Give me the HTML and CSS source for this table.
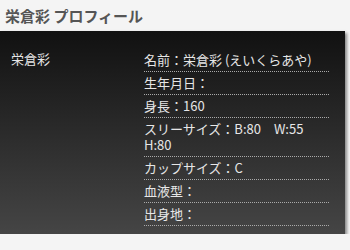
FILE: index.html
```html
<!DOCTYPE html>
<html lang="ja">
<head>
  <meta charset="UTF-8">
  <title>栄倉彩 プロフィール</title>
  <link rel="stylesheet" href="styles.css">
</head>
<body>
  <h2 class="title">栄倉彩 プロフィール</h2>

  <div class="profile">
    <div class="profile-name">栄倉彩</div>

    <!-- Profile details -->
    <ul class="profile-list">
      <li>名前：栄倉彩 (えいくらあや)</li>
      <li>生年月日：</li>
      <li>身長：160</li>
      <li>スリーサイズ：B:80　W:55　H:80</li>
      <li>カップサイズ：C</li>
      <li>血液型：</li>
      <li>出身地：</li>
    </ul>
  </div>
</body>
</html>
```

FILE: styles.css
```css
body {
  margin: 0;
  background-color: #f4f4f4;
  font-family: "Noto Sans CJK JP", "Noto Sans", sans-serif;
}

.title {
  margin: 0;
  padding: 7px 5px 6px;
  font-size: 15px;
  line-height: 18px;
  font-weight: bold;
  color: #555;
}

.profile {
  display: flex;
  width: 345px;
  padding: 18px 16px 8px 11px;
  box-sizing: border-box;
  background: linear-gradient(to bottom, #111111, #454545);
  box-shadow: 2px 2px 3px rgba(0, 0, 0, 0.45);
  color: #e6e6e6;
  font-size: 13px;
}

.profile-name {
  width: 133px;
  line-height: 16px;
  margin-top: 2px;
}

.profile-list {
  flex: 1;
  margin: 0;
  padding: 0;
  list-style: none;
}

.profile-list li {
  padding: 3px 0;
  line-height: 16px;
  border-bottom: 1px dotted #aaa;
}
```
